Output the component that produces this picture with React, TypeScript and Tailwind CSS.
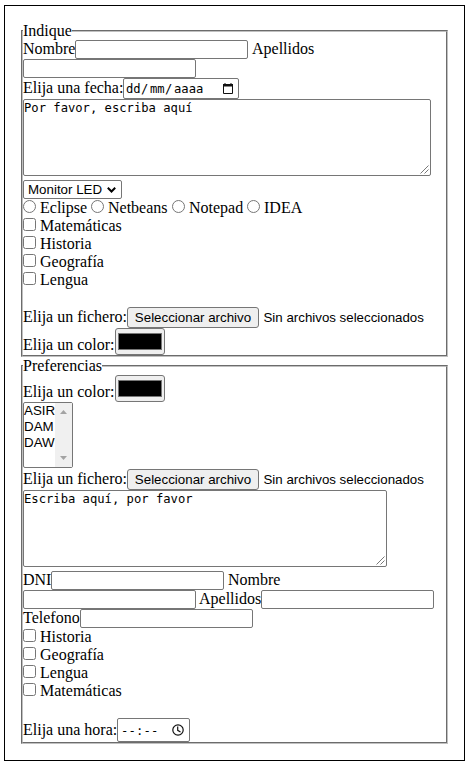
import React from "react";

function Field({ className = "" }: { className?: string }) {
  return <input type="text" className={`block h-[19px] w-[173px] shrink-0 rounded-[2px] border border-[#767676] bg-white px-px font-['Liberation_Sans',sans-serif] text-[13.33px] ${className}`} />;
}

function Label({ width, top = "", children }: { width: string; top?: string; children: React.ReactNode }) {
  return <span className={`block shrink-0 whitespace-nowrap ${width} ${top}`}>{children}</span>;
}

function Area({ text, width }: { text: string; width: string }) {
  return (
    <div className={`relative h-[77px] rounded-[2px] border border-[#767676] bg-white pt-[1px] font-['DejaVu_Sans_Mono',monospace] text-[12.18px] leading-[15px] ${width}`}>
      {text}
      <svg className="absolute bottom-px right-px" width="9" height="9" viewBox="0 0 9 9" stroke="#555" strokeWidth="0.8" fill="none">
        <path d="M0.5 8.5 8.5 0.5M4.5 8.5 8.5 4.5" />
      </svg>
    </div>
  );
}

function Check({ children }: { children: string }) {
  return (
    <label className="flex h-[18px]">
      <input type="checkbox" className="mr-[4px] mt-px block size-[13px]" />
      {children}
    </label>
  );
}

function Radio({ width, children }: { width: string; children: string }) {
  return (
    <label className={`flex ${width}`}>
      <input type="radio" name="ide" className="mr-[4px] mt-px block size-[13px]" />
      {children}
    </label>
  );
}

function FileRow() {
  return (
    <div className="flex h-[21px]">
      <Label width="w-[104px]" top="mt-px">Elija un fichero:</Label>
      <button className="h-[21px] w-[132px] shrink-0 whitespace-nowrap rounded-[3px] border border-[#767676] bg-[#efefef] font-['Liberation_Sans',sans-serif] text-[13.33px] leading-[19px]">Seleccionar archivo</button>
      <span className="ml-[4.5px] whitespace-nowrap font-['Liberation_Sans',sans-serif] text-[13.3px] leading-[21px]">Sin archivos seleccionados</span>
    </div>
  );
}

function ColorRow() {
  return (
    <div className="flex h-[27px]">
      <Label width="w-[92px]" top="mt-[8px]">Elija un color:</Label>
      <button className="h-[27px] w-[50px] rounded-[3px] border border-[#767676] bg-[#efefef] px-[2px] py-[4px]">
        <span className="block h-[17px] border border-[#777] bg-black" />
      </button>
    </div>
  );
}

export default function App() {
  return (
    <div className="h-[766px] w-[470px] bg-white pl-[4px] pt-[5px] font-['Liberation_Serif',serif] text-[16px] leading-[18px] text-black">
      <div className="h-[756px] w-[461px] border border-black pl-[16px] pt-[16px]">
        <fieldset className="h-[335px] w-[427px] border-2 border-[#c0c0c0] [border-style:groove]">
          <legend>Indique</legend>
          <div className="flex h-[19px]">
            <Label width="w-[52px]">Nombre</Label>
            <Field />
            <Label width="ml-[4px]">Apellidos</Label>
          </div>
          <Field />
          <div className="flex h-[21px]">
            <Label width="w-[100px]" top="mt-px">Elija una fecha:</Label>
            <div className="flex h-[21px] w-[116px] items-center justify-between rounded-[2px] border border-[#767676] pl-[2px] pr-[4px] font-['DejaVu_Sans_Mono',monospace] text-[12.18px] leading-[19px]">
              <span className="flex whitespace-nowrap pt-px">
                <span className="w-[15px]">dd</span>
                <span className="w-[9px]">/</span>
                <span className="w-[15px]">mm</span>
                <span className="w-[9px]">/</span>
                <span>aaaa</span>
              </span>
              <svg width="12" height="13" viewBox="0 0 12 13">
                <path d="M1.5 2.5h9v9h-9Z" fill="none" stroke="#111" />
                <path d="M1 2h10v2.5H1ZM2.5 1h1v1h-1ZM8.5 1h1v1h-1Z" fill="#111" />
              </svg>
            </div>
          </div>
          <Area text="Por favor, escriba aquí" width="w-[408px]" />
          <div className="mt-[4px] flex h-[19px] w-[99px] items-center rounded-[2px] border border-[#767676] pl-[4px] font-['Liberation_Sans',sans-serif] text-[13.33px] leading-[17px]">
            <span className="w-[79px] whitespace-nowrap">Monitor LED</span>
            <svg width="9" height="6" viewBox="0 0 9 6"><path d="M0.8 0.8 4.5 4.5 8.2 0.8" fill="none" stroke="black" strokeWidth="2" /></svg>
          </div>
          <div className="flex h-[18px]">
            <Radio width="w-[68px]">Eclipse</Radio>
            <Radio width="w-[81px]">Netbeans</Radio>
            <Radio width="w-[75px]">Notepad</Radio>
            <Radio width="w-[60px]">IDEA</Radio>
          </div>
          <Check>Matemáticas</Check>
          <Check>Historia</Check>
          <Check>Geografía</Check>
          <Check>Lengua</Check>
          <div className="h-[18px]" />
          <FileRow />
          <ColorRow />
        </fieldset>
        <fieldset className="h-[387px] w-[427px] border-2 border-[#c0c0c0] [border-style:groove]">
          <legend>Preferencias</legend>
          <ColorRow />
          <div className="mb-px flex h-[66px] w-[50px] justify-between rounded-[2px] border border-[#767676] font-['Liberation_Sans',sans-serif] text-[13.33px] leading-[16px]">
            <div className="w-[31px] whitespace-nowrap"><div>ASIR</div><div>DAM</div><div>DAW</div></div>
            <div className="flex w-[17px] flex-col items-center justify-between bg-[#f0f0f0] py-[7px]">
              <svg width="7" height="4" viewBox="0 0 7 4"><path d="M0 4 3.5 0 7 4Z" fill="#a3a3a3" /></svg>
              <svg width="7" height="4" viewBox="0 0 7 4"><path d="M0 0 3.5 4 7 0Z" fill="#a3a3a3" /></svg>
            </div>
          </div>
          <FileRow />
          <Area text="Escriba aquí, por favor" width="w-[364px]" />
          <div className="mt-[4px] flex h-[19px]">
            <Label width="w-[28px]">DNI</Label>
            <Field />
            <Label width="ml-[4px]">Nombre</Label>
          </div>
          <div className="flex h-[19px]">
            <Field />
            <Label width="ml-[3px] w-[62px]">Apellidos</Label>
            <Field />
          </div>
          <div className="flex h-[19px]">
            <Label width="w-[57px]">Telefono</Label>
            <Field />
          </div>
          <Check>Historia</Check>
          <Check>Geografía</Check>
          <Check>Lengua</Check>
          <Check>Matemáticas</Check>
          <div className="h-[18px]" />
          <div className="flex h-[24px]">
            <Label width="w-[94px]" top="mt-[3px]">Elija una hora:</Label>
            <div className="flex h-[24px] w-[73px] items-center justify-between rounded-[2px] border border-[#767676] pl-[3px] pr-[5px] font-['DejaVu_Sans_Mono',monospace] text-[12.18px]">
              <span className="pt-px tracking-[0.2px]">--:--</span>
              <svg width="12" height="12" viewBox="0 0 12 12" fill="none" stroke="#111" strokeWidth="1.2">
                <circle cx="6" cy="6" r="5.2" /><path d="M5.7 2.6v3.7l2.8 1.7" />
              </svg>
            </div>
          </div>
        </fieldset>
      </div>
    </div>
  );
}
